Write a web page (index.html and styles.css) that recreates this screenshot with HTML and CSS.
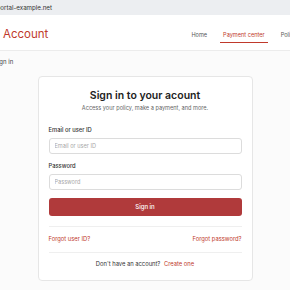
FILE: index.html
```html
<!DOCTYPE html>
<html lang="en">
<head>
  <meta charset="UTF-8" />
  <meta name="viewport" content="width=device-width, initial-scale=1.0"/>
  <title>Sign in</title>
  <link rel="stylesheet" href="styles.css">
</head>
<body>
  <div class="page">
    <div class="urlbar">portal-example.net</div>

    <header class="topbar">
      <div class="brand">Account</div>
      <nav class="nav">
        <a href="#">Home</a>
        <a href="#" class="active">Payment center</a>
        <a href="#">Policies</a>
      </nav>
    </header>

    <div class="crumbs">Sign in</div>

    <main class="main">
      <div class="card">
        <h1>Sign in to your acount</h1>
        <p class="sub">Access your policy, make a payment, and more.</p>

        <form class="form" onsubmit="return false">
          <label for="user">Email or user ID</label>
          <input type="text" id="user" placeholder="Email or user ID" />

          <label for="pass">Password</label>
          <input type="password" id="pass" placeholder="Password" />

          <button type="submit">Sign in</button>
        </form>

        <div class="links">
          <a href="#">Forgot user ID?</a>
          <a href="#">Forgot password?</a>
        </div>

        <div class="signup">Don't have an account? <a href="#">Create one</a></div>
      </div>
    </main>
  </div>
</body>
</html>
```

FILE: styles.css
```css
* { box-sizing: border-box; }

body {
  margin: 0;
  font-family: 'Inter', 'Liberation Sans', sans-serif;
  background: #fbfbfb;
  color: #222;
  overflow: hidden;
}

.page {
  width: 310px;
  margin-left: -6px;
}

.urlbar {
  height: 15px;
  line-height: 15px;
  padding-left: 2.5px;
  background: #eceef1;
  font-size: 6.2px;
  color: #333;
}

.topbar {
  height: 36px;
  display: flex;
  background: #fff;
  border-bottom: 1px solid #ececec;
  white-space: nowrap;
}

.brand {
  width: 201px;
  padding-left: 9px;
  margin-top: 2px;
  display: flex;
  align-items: center;
  font-size: 11.5px;
  color: #c0392b;
}

.nav {
  display: flex;
  align-items: center;
  gap: 10px;
  padding-top: 5px;
}

.nav a {
  font-size: 5.6px;
  line-height: 8px;
  padding: 3px 3px;
  color: #555;
  text-decoration: none;
  border-bottom: 1.5px solid transparent;
}

.nav a.active {
  color: #c0392b;
  border-bottom-color: #c0392b;
}

.crumbs {
  font-size: 6px;
  line-height: 8px;
  padding-top: 7px;
  color: #444;
}

.main {
  display: flex;
  justify-content: center;
  width: 302px;
  margin-top: 10px;
}

.card {
  width: 215px;
  background: #fff;
  border: 1px solid #e6e6e6;
  border-radius: 4px;
  padding: 12px 10px 12px;
}

.card h1 {
  margin: 0;
  text-align: center;
  font-size: 10.5px;
  line-height: 13px;
  font-weight: 600;
  color: #222;
}

.sub {
  margin: 2px 0 0;
  text-align: center;
  font-size: 5.6px;
  line-height: 8px;
  color: #666;
}

.form {
  display: flex;
  flex-direction: column;
  margin-top: 14px;
}

.form label {
  font-size: 5.8px;
  line-height: 8px;
  font-weight: 500;
  color: #333;
  margin-bottom: 4px;
}

.form input {
  height: 16px;
  border: 1px solid #dcdcdc;
  border-radius: 3px;
  padding: 0 5px;
  font-family: inherit;
  font-size: 5.6px;
  margin-bottom: 8px;
}

.form input::placeholder {
  color: #a8a8a8;
}

.form button {
  height: 17.5px;
  border: none;
  border-radius: 3px;
  background: #b03a3b;
  color: #fff;
  font-family: inherit;
  font-size: 6px;
  font-weight: 500;
}

.links {
  display: flex;
  justify-content: space-between;
  margin-top: 10px;
  padding: 8px 0 9px;
  border-top: 1px solid #efefef;
  border-bottom: 1px solid #efefef;
  font-size: 5.8px;
  line-height: 8px;
}

.links a,
.signup a {
  color: #c0392b;
  text-decoration: none;
}

.signup {
  margin-top: 7px;
  text-align: center;
  font-size: 5.8px;
  line-height: 8px;
  color: #333;
}

.signup a {
  margin-left: 2px;
}
```
